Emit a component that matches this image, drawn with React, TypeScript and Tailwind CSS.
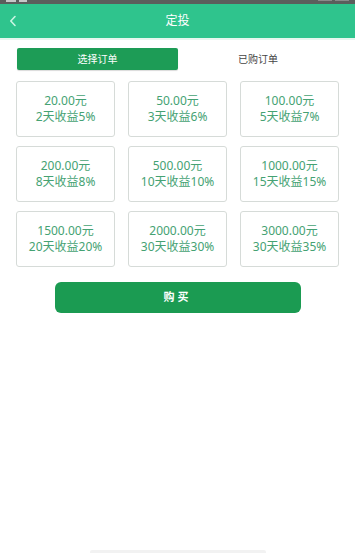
import React, { useState } from "react";

interface Plan {
  amount: string;
  days: number;
  rate: number;
}

const plans: Plan[] = [
  { amount: "20.00", days: 2, rate: 5 },
  { amount: "50.00", days: 3, rate: 6 },
  { amount: "100.00", days: 5, rate: 7 },
  { amount: "200.00", days: 8, rate: 8 },
  { amount: "500.00", days: 10, rate: 10 },
  { amount: "1000.00", days: 15, rate: 15 },
  { amount: "1500.00", days: 20, rate: 20 },
  { amount: "2000.00", days: 30, rate: 30 },
  { amount: "3000.00", days: 30, rate: 35 },
];

const App: React.FC = () => {
  const [tab, setTab] = useState(0);

  return (
    <div
      className="w-[355px] h-[553px] bg-white flex flex-col overflow-hidden"
      style={{ fontFamily: '"Noto Sans", "Noto Sans CJK SC", sans-serif' }}
    >
      {/* Status bar */}
      <div className="h-[4px] bg-[#5b5e5c] flex items-start justify-between px-[6px]">
        <div className="flex gap-[3px]">
          <div className="w-[10px] h-[2px] bg-[#c8c8c8]" />
          <div className="w-[8px] h-[2px] bg-[#c8c8c8]" />
        </div>
        <div className="flex gap-[3px]">
          <div className="w-[14px] h-[1px] bg-[#8a8a8a]" />
          <div className="w-[14px] h-[1px] bg-[#8a8a8a]" />
        </div>
      </div>

      {/* Header */}
      <header className="h-[34px] bg-[#2fc48d] relative flex items-center justify-center">
        <svg
          className="absolute left-[9px] top-[11px]"
          width="8"
          height="12"
          viewBox="0 0 8 12"
          fill="none"
          stroke="#c9f5e2"
          strokeWidth="1.6"
          strokeLinecap="round"
          strokeLinejoin="round"
        >
          <path d="M6 1.5 L1.8 6 L6 10.5" />
        </svg>
        <h1 className="text-[12px] text-white">定投</h1>
      </header>
      <div className="h-[2px] bg-[#e6f7ef]" />

      {/* Tabs */}
      <div className="flex px-[17px] pt-[8px]">
        {["选择订单", "已购订单"].map((t, i) => (
          <button
            key={t}
            onClick={() => setTab(i)}
            className={
              i === tab
                ? "w-[161px] h-[22px] rounded-[2px] bg-[#1d9c56] text-white text-[10px] shadow-[0_1px_1px_rgba(0,0,0,0.15)]"
                : "flex-1 h-[22px] text-[#444] text-[10px]"
            }
          >
            {t}
          </button>
        ))}
      </div>

      {/* Plans */}
      <div className="grid grid-cols-3 gap-x-[13px] gap-y-[9px] px-[16px] pt-[11px]">
        {plans.map((p) => (
          <div
            key={p.amount}
            className="h-[56px] border border-[#d6dbd8] rounded-[3px] flex flex-col items-center justify-center text-[12px] leading-[16px] text-[#45a273]"
          >
            <span>{p.amount}元</span>
            <span>
              {p.days}天收益{p.rate}%
            </span>
          </div>
        ))}
      </div>

      {/* Buy */}
      <div className="flex justify-center pt-[15px]">
        <button className="w-[246px] h-[31px] rounded-[6px] bg-[#1b9b52] text-white text-[11px] font-bold tracking-[3px]">
          购买
        </button>
      </div>

      <div className="flex-1" />
      <div className="flex justify-center">
        <div className="w-[176px] h-[3px] bg-[#f2f2f2] rounded-t-[2px]" />
      </div>
    </div>
  );
};

export default App;
